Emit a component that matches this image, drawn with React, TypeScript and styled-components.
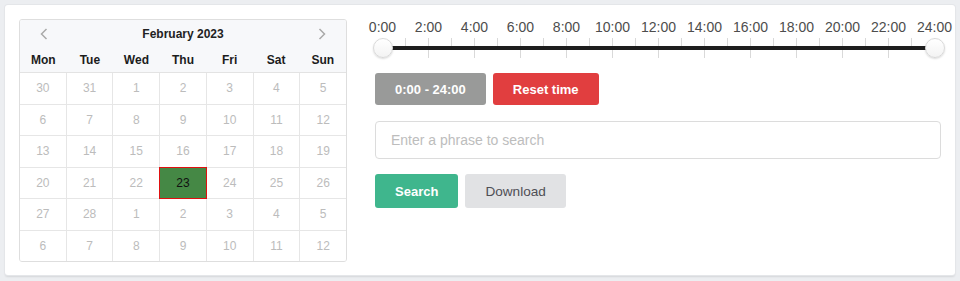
import React, {useState} from "react";
import styled, {createGlobalStyle} from "styled-components";

const GlobalStyle = createGlobalStyle`
  html, body {
    margin: 0;
    padding: 0;
    background: #eceef1;
    font-family: "Liberation Sans", Arial, sans-serif;
  }
  #root {
    padding: 5px;
  }
`

const Card = styled.div`
  box-sizing: border-box;
  width: 950px;
  height: 270px;
  background: white;
  border-radius: 3px;
  box-shadow: 0 0 0 1px #e4e6e9, 0 2px 2px rgba(0, 0, 0, 0.1);
  padding: 14px;
  display: flex;
  gap: 28px;
`

const CalendarBox = styled.div`
  box-sizing: border-box;
  width: 328px;
  height: 243px;
  border: 1px solid #dedede;
  border-radius: 3px;
  overflow: hidden;
  display: flex;
  flex-direction: column;
`

const CalHeader = styled.div`
  background: #f7f8fa;
  border-bottom: 1px solid #e3e3e3;
`

const MonthRow = styled.div`
  height: 28px;
  display: flex;
  align-items: center;
  justify-content: space-between;
  padding: 0 20px;
`

const NavArrow = styled.span`
  display: flex;
  align-items: center;
  color: #a9a9a9;
`

const MonthTitle = styled.div`
  font-size: 12px;
  font-weight: bold;
  color: #222;
`

const WeekRow = styled.div`
  height: 24px;
  display: grid;
  grid-template-columns: repeat(7, 1fr);
  align-items: center;
`

const WeekDay = styled.div`
  text-align: center;
  font-size: 12px;
  font-weight: bold;
  color: #1c1c1c;
`

const DayGrid = styled.div`
  flex: 1;
  display: grid;
  grid-template-columns: repeat(7, 1fr);
  grid-template-rows: repeat(6, 1fr);
  gap: 1px;
  background: #e6e6e6;
`

const DayCell = styled.div<{ $selected?: boolean }>`
  display: flex;
  align-items: center;
  justify-content: center;
  font-size: 12px;
  background: ${p => p.$selected ? '#458845' : 'white'};
  color: ${p => p.$selected ? '#111' : '#bcbcbc'};
  box-shadow: ${p => p.$selected ? '0 0 0 1px #e01010' : 'none'};
  position: relative;
`

const RightColumn = styled.div`
  width: 566px;
  display: flex;
  flex-direction: column;
`

const Slider = styled.div`
  position: relative;
  height: 40px;
`

const SliderLabel = styled.span`
  position: absolute;
  top: 0;
  transform: translateX(-50%);
  font-size: 14px;
  line-height: 16px;
  color: #4d4d4d;
  white-space: nowrap;
`

const Tick = styled.span<{ $major?: boolean }>`
  position: absolute;
  top: 19px;
  width: 1px;
  height: ${p => p.$major ? '20px' : '10px'};
  background: #d9d9d9;
`

const Track = styled.div`
  position: absolute;
  top: 27px;
  left: 7px;
  width: 552px;
  height: 4px;
  background: #1e1e1e;
`

const Thumb = styled.span`
  position: absolute;
  top: 19px;
  box-sizing: border-box;
  width: 20px;
  height: 20px;
  margin-left: -10px;
  border-radius: 50%;
  background: linear-gradient(#ffffff, #f3f3f3);
  border: 1px solid #dadada;
  box-shadow: 0 1px 2px rgba(0, 0, 0, 0.15);
`

const ButtonRow = styled.div<{ $top: number }>`
  display: flex;
  gap: 7px;
  margin-top: ${p => p.$top}px;
`

const colors = {
    gray: {bg: '#999a99', fg: 'white', weight: 'bold', size: 13},
    red: {bg: '#e13e3f', fg: 'white', weight: 'bold', size: 13},
    green: {bg: '#3fb68d', fg: 'white', weight: 'bold', size: 13},
    light: {bg: '#e1e2e4', fg: '#4f4f55', weight: 'normal', size: 13.6},
}

const Button = styled.button<{ $variant: keyof typeof colors, $height: number }>`
  height: ${p => p.$height}px;
  padding: 0 20px;
  border: none;
  border-radius: 3px;
  font-family: "Liberation Sans", Arial, sans-serif;
  font-size: ${p => colors[p.$variant].size}px;
  font-weight: ${p => colors[p.$variant].weight};
  background: ${p => colors[p.$variant].bg};
  color: ${p => colors[p.$variant].fg};
  cursor: pointer;
`

const SearchInput = styled.input`
  box-sizing: border-box;
  margin-top: 16px;
  width: 566px;
  height: 38px;
  border: 1px solid #dcdcdc;
  border-radius: 4px;
  padding: 0 15px;
  font-family: "Liberation Sans", Arial, sans-serif;
  font-size: 14px;
  color: #333;
  outline: none;
  &::placeholder {
    color: #bdbdbd;
  }
`

const Chevron = ({dir}: { dir: 'left' | 'right' }) => (
    <svg width="8" height="12" viewBox="0 0 8 12">
        <path d={dir === 'left' ? 'M6.5 1 L1.5 6 L6.5 11' : 'M1.5 1 L6.5 6 L1.5 11'}
              fill="none" stroke="currentColor" strokeWidth="1.5"/>
    </svg>
)

const weekDays = ['Mon', 'Tue', 'Wed', 'Thu', 'Fri', 'Sat', 'Sun']
const weeks = [
    [30, 31, 1, 2, 3, 4, 5],
    [6, 7, 8, 9, 10, 11, 12],
    [13, 14, 15, 16, 17, 18, 19],
    [20, 21, 22, 23, 24, 25, 26],
    [27, 28, 1, 2, 3, 4, 5],
    [6, 7, 8, 9, 10, 11, 12],
]
const hourStep = 23

function App() {
    const [phrase, setPhrase] = useState('')
    return (
        <>
            <GlobalStyle/>
            <Card>
                <CalendarBox>
                    <CalHeader>
                        <MonthRow>
                            <NavArrow><Chevron dir="left"/></NavArrow>
                            <MonthTitle>February 2023</MonthTitle>
                            <NavArrow><Chevron dir="right"/></NavArrow>
                        </MonthRow>
                        <WeekRow>
                            {weekDays.map(d => <WeekDay key={d}>{d}</WeekDay>)}
                        </WeekRow>
                    </CalHeader>
                    <DayGrid>
                        {weeks.map((w, i) => w.map((d, j) =>
                            <DayCell key={i + '-' + j} $selected={i === 3 && d === 23}>{d}</DayCell>
                        ))}
                    </DayGrid>
                </CalendarBox>
                <RightColumn>
                    <Slider>
                        {Array.from({length: 25}).map((_, k) =>
                            <Tick key={'t' + k} $major={k % 2 === 0} style={{left: 7 + k * hourStep}}/>
                        )}
                        {Array.from({length: 13}).map((_, k) =>
                            <SliderLabel key={'l' + k} style={{left: 7.5 + k * 2 * hourStep}}>{k * 2}:00</SliderLabel>
                        )}
                        <Track/>
                        <Thumb style={{left: 7.5}}/>
                        <Thumb style={{left: 7.5 + 24 * hourStep}}/>
                    </Slider>
                    <ButtonRow $top={14}>
                        <Button $variant="gray" $height={32}>0:00 - 24:00</Button>
                        <Button $variant="red" $height={32}>Reset time</Button>
                    </ButtonRow>
                    <SearchInput placeholder="Enter a phrase to search" value={phrase}
                                 onChange={e => setPhrase(e.target.value)}/>
                    <ButtonRow $top={15}>
                        <Button $variant="green" $height={34}>Search</Button>
                        <Button $variant="light" $height={34}>Download</Button>
                    </ButtonRow>
                </RightColumn>
            </Card>
        </>
    );
}

export default App;
